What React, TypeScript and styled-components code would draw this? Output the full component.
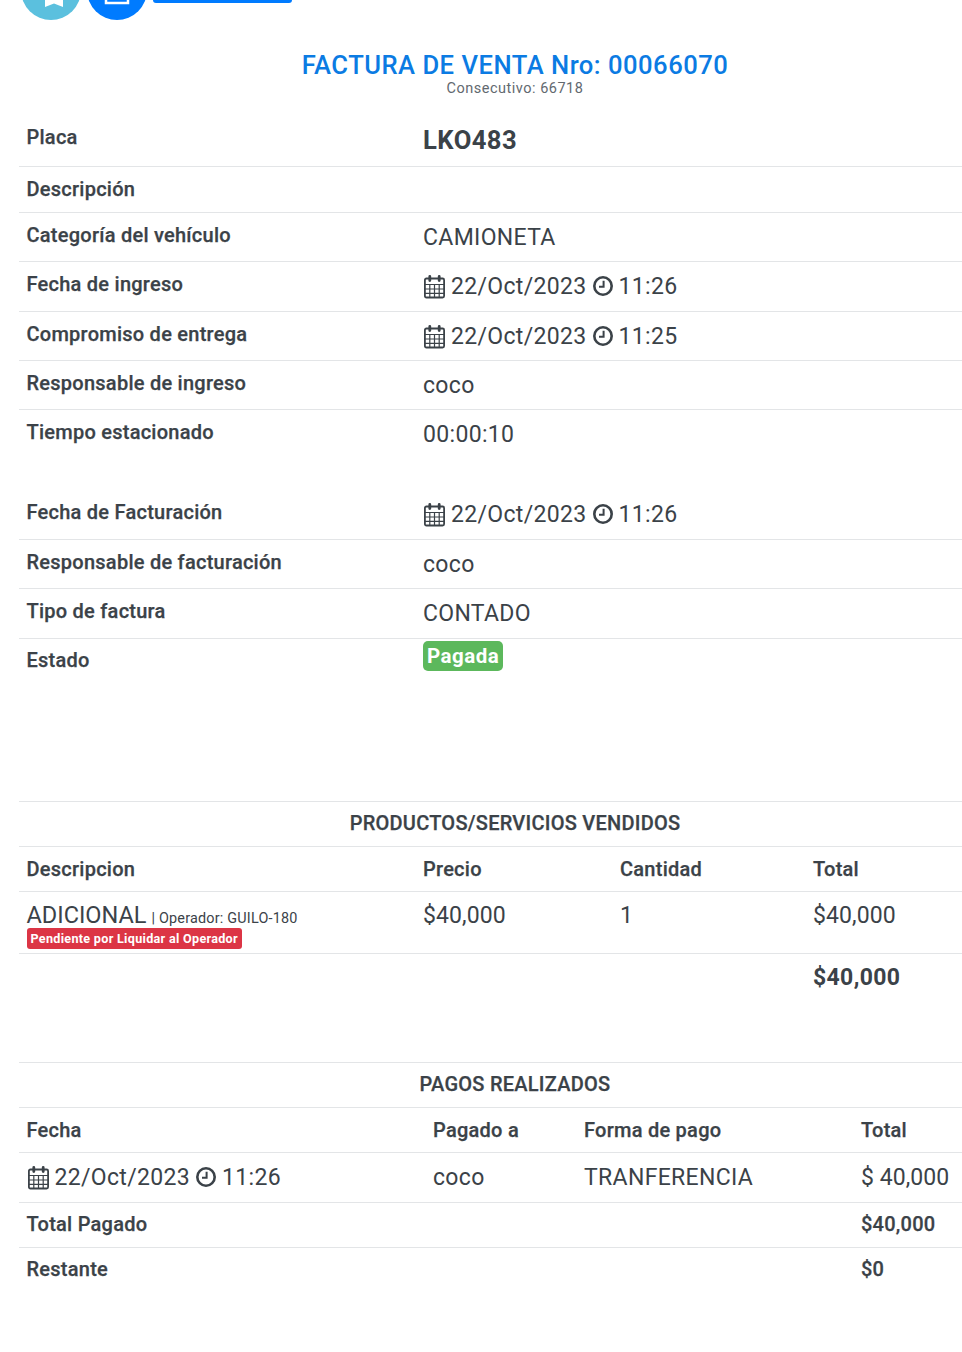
import React from "react";
import styled, { createGlobalStyle } from "styled-components";

const GlobalStyle = createGlobalStyle`
  html, body {
    margin: 0;
    padding: 0;
    background: #fff;
    overflow: hidden;
  }
  body {
    font-family: Roboto, "Liberation Sans", sans-serif;
    color: #3b4248;
  }
`;

const Page = styled.div`
  width: 962px;
  height: 1352px;
  overflow: hidden;
`;

const Sheet = styled.div`
  width: 992px;
  margin-left: 19px;
`;

const Toolbar = styled.div`
  display: flex;
  align-items: flex-start;
  gap: 6px;
  height: 60px;
  margin-top: -40px;
  padding-left: 2px;
`;

const RoundButton = styled.div<{ $color: string }>`
  width: 60px;
  height: 60px;
  border-radius: 50%;
  background: ${(p) => p.$color};
  display: flex;
  justify-content: center;
  align-items: flex-end;
`;

const WideButton = styled.div`
  width: 139px;
  height: 43px;
  border-radius: 3px;
  background: #007bff;
`;

const Heading = styled.div`
  text-align: center;
  padding-top: 30px;
  height: 65px;
`;

const Title = styled.h1`
  margin: 0;
  font-size: 25.6px;
  line-height: 30px;
  font-weight: 500;
  letter-spacing: 0.5px;
  color: #0b7be3;
`;

const Subtitle = styled.div`
  font-size: 14.5px;
  line-height: 17px;
  letter-spacing: 0.5px;
  color: #62696f;
`;

const Row = styled.div<{ $cols: string; $height: number; $line?: boolean }>`
  display: grid;
  grid-template-columns: ${(p) => p.$cols};
  align-items: start;
  box-sizing: border-box;
  height: ${(p) => p.$height}px;
  border-top: ${(p) => (p.$line === false ? "0" : "1px solid #e3e5e7")};
  padding-top: 7.5px;
  padding-left: 7.5px;
`;

const SectionRow = styled(Row)`
  padding-top: 6.5px;
  padding-left: 0;
  text-align: center;
`;

const SummaryRow = styled(Row)`
  padding-top: 6.5px;
`;

const Label = styled.div`
  font-size: 20px;
  line-height: 28px;
  font-weight: 500;
  letter-spacing: 0.25px;
  white-space: nowrap;
  -webkit-text-stroke: 0.25px #3b4248;
`;

const Value = styled.div`
  display: flex;
  align-items: center;
  gap: 6px;
  padding-top: 1px;
  font-size: 23px;
  line-height: 32px;
  letter-spacing: 0.33px;
  white-space: nowrap;
`;

const PriceValue = styled(Value)`
  padding-top: 0;
  letter-spacing: 0.1px;
`;

const PaidValue = styled(Value)`
  letter-spacing: 0.05px;
`;

const AmountValue = styled(PriceValue)`
  font-weight: 700;
  letter-spacing: 0.35px;
`;

const Plate = styled(Value)`
  font-weight: 700;
  font-size: 25.6px;
  letter-spacing: 0.45px;
`;

const StatusBadge = styled.span`
  display: inline-block;
  margin-top: -5px;
  height: 30px;
  padding: 0 4px;
  border-radius: 5px;
  background: #5cb85c;
  color: #fff;
  font-size: 20.5px;
  line-height: 30px;
  font-weight: 700;
  letter-spacing: 0.5px;
`;

const ItemName = styled.div`
  display: flex;
  align-items: baseline;
  gap: 5px;
  height: 28px;
  font-size: 23.5px;
  line-height: 30px;
  white-space: nowrap;
`;

const Operator = styled.span`
  font-size: 14.4px;
  letter-spacing: 0.2px;
`;

const PendingBadge = styled.div`
  width: fit-content;
  height: 21px;
  padding: 0 4px;
  border-radius: 3px;
  background: #dc3545;
  color: #fff;
  font-size: 12.6px;
  line-height: 21px;
  font-weight: 700;
  letter-spacing: 0.3px;
  white-space: nowrap;
`;

const Section = styled.div<{ $top: number }>`
  margin-top: ${(p) => p.$top}px;
`;

const CalendarIcon = () => (
  <svg width="22" height="24" viewBox="0 0 22 24" fill="none" stroke="#3b4248" strokeWidth="1.8">
    <rect x="1.9" y="3.5" width="19.2" height="19" rx="1.5" />
    <path d="M2 9.5h19M2 14h19M2 18.3h19M6.8 9.5v13M11.5 9.5v13M16.2 9.5v13" strokeWidth="1.2" />
    <path d="M6.8 1.5v4M16.2 1.5v4" strokeWidth="2.8" strokeLinecap="round" />
  </svg>
);

const ClockIcon = () => (
  <svg width="20" height="22" viewBox="0 0 20 22" fill="none" stroke="#3b4248">
    <circle cx="10" cy="10" r="8.7" strokeWidth="2.6" />
    <path d="M10.6 4.8v6H6" strokeWidth="2" />
  </svg>
);

const DateTime: React.FC<{ date: string; time: string }> = ({ date, time }) => (
  <Value>
    <CalendarIcon />
    {date}
    <ClockIcon />
    {time}
  </Value>
);

const INFO_COLS = "396.5px 1fr";
const PRODUCT_COLS = "396.5px 197px 193px 1fr";
const PAYMENT_COLS = "406.5px 151px 277px 1fr";

export default function App() {
  return (
    <Page>
      <GlobalStyle />
      <Sheet>
        <Toolbar>
          <RoundButton $color="#5bc0de">
            <svg width="60" height="60" viewBox="0 0 60 60" fill="#fff">
              <path d="M24 30h18v17l-9-3.5L24 47z" />
            </svg>
          </RoundButton>
          <RoundButton $color="#007bff">
            <svg width="60" height="60" viewBox="0 0 60 60" fill="none" stroke="#fff" strokeWidth="2.5">
              <rect x="19" y="30" width="22" height="13" />
            </svg>
          </RoundButton>
          <WideButton />
        </Toolbar>
        <Heading>
          <Title>FACTURA DE VENTA Nro: 00066070</Title>
          <Subtitle>Consecutivo: 66718</Subtitle>
        </Heading>

        <Row $cols={INFO_COLS} $height={51} $line={false}>
          <Label>Placa</Label>
          <Plate>LKO483</Plate>
        </Row>
        <Row $cols={INFO_COLS} $height={46}>
          <Label>Descripción</Label>
        </Row>
        <Row $cols={INFO_COLS} $height={49}>
          <Label>Categoría del vehículo</Label>
          <Value>CAMIONETA</Value>
        </Row>
        <Row $cols={INFO_COLS} $height={50}>
          <Label>Fecha de ingreso</Label>
          <DateTime date="22/Oct/2023" time="11:26" />
        </Row>
        <Row $cols={INFO_COLS} $height={49}>
          <Label>Compromiso de entrega</Label>
          <DateTime date="22/Oct/2023" time="11:25" />
        </Row>
        <Row $cols={INFO_COLS} $height={49}>
          <Label>Responsable de ingreso</Label>
          <Value>coco</Value>
        </Row>
        <Row $cols={INFO_COLS} $height={81}>
          <Label>Tiempo estacionado</Label>
          <Value>00:00:10</Value>
        </Row>
        <Row $cols={INFO_COLS} $height={49} $line={false}>
          <Label>Fecha de Facturación</Label>
          <DateTime date="22/Oct/2023" time="11:26" />
        </Row>
        <Row $cols={INFO_COLS} $height={49}>
          <Label>Responsable de facturación</Label>
          <Value>coco</Value>
        </Row>
        <Row $cols={INFO_COLS} $height={50}>
          <Label>Tipo de factura</Label>
          <Value>CONTADO</Value>
        </Row>
        <SummaryRow $cols={INFO_COLS} $height={49}>
          <Label>Estado</Label>
          <div>
            <StatusBadge>Pagada</StatusBadge>
          </div>
        </SummaryRow>

        <Section $top={114}>
          <SectionRow $cols="1fr" $height={45}>
            <Label>PRODUCTOS/SERVICIOS VENDIDOS</Label>
          </SectionRow>
          <Row $cols={PRODUCT_COLS} $height={45}>
            <Label>Descripcion</Label>
            <Label>Precio</Label>
            <Label>Cantidad</Label>
            <Label>Total</Label>
          </Row>
          <Row $cols={PRODUCT_COLS} $height={62}>
            <div>
              <ItemName>
                ADICIONAL <Operator>| Operador: GUILO-180</Operator>
              </ItemName>
              <PendingBadge>Pendiente por Liquidar al Operador</PendingBadge>
            </div>
            <PriceValue>$40,000</PriceValue>
            <PriceValue>1</PriceValue>
            <PriceValue>$40,000</PriceValue>
          </Row>
          <Row $cols={PRODUCT_COLS} $height={49}>
            <div />
            <div />
            <div />
            <AmountValue>$40,000</AmountValue>
          </Row>
        </Section>

        <Section $top={60}>
          <SectionRow $cols="1fr" $height={45}>
            <Label>PAGOS REALIZADOS</Label>
          </SectionRow>
          <Row $cols={PAYMENT_COLS} $height={45}>
            <Label>Fecha</Label>
            <Label>Pagado a</Label>
            <Label>Forma de pago</Label>
            <Label>Total</Label>
          </Row>
          <Row $cols={PAYMENT_COLS} $height={50}>
            <DateTime date="22/Oct/2023" time="11:26" />
            <Value>coco</Value>
            <Value>TRANFERENCIA</Value>
            <PaidValue>$ 40,000</PaidValue>
          </Row>
          <SummaryRow $cols={PAYMENT_COLS} $height={45}>
            <Label>Total Pagado</Label>
            <div />
            <div />
            <Label>$40,000</Label>
          </SummaryRow>
          <SummaryRow $cols={PAYMENT_COLS} $height={45}>
            <Label>Restante</Label>
            <div />
            <div />
            <Label>$0</Label>
          </SummaryRow>
        </Section>
      </Sheet>
    </Page>
  );
}
